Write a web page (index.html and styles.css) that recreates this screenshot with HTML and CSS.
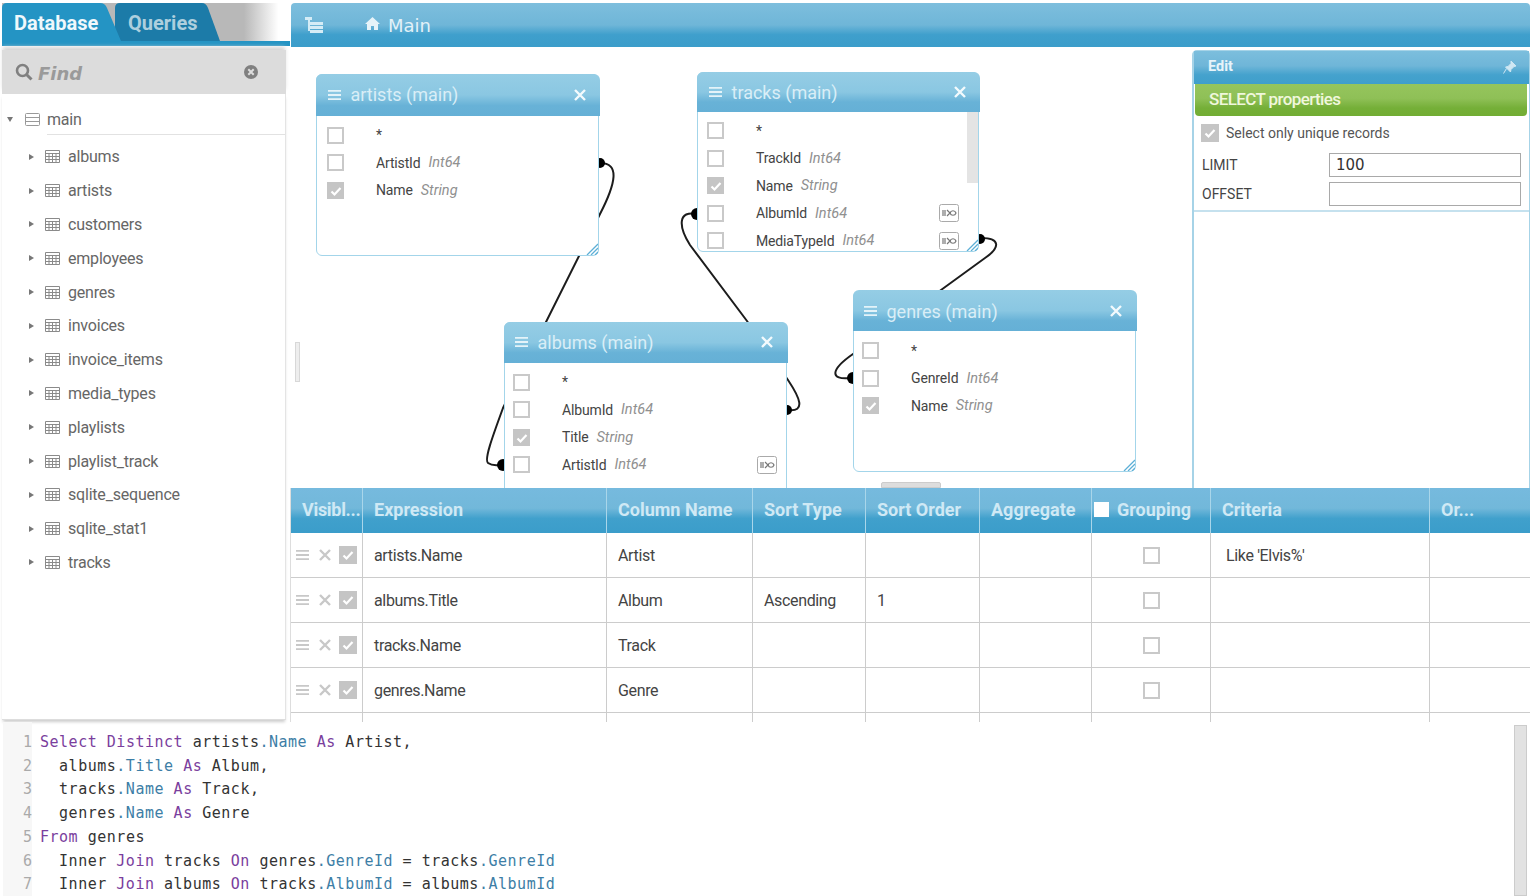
FILE: index.html
```html
<!DOCTYPE html>
<html lang="en">
<head>
<meta charset="utf-8">
<title>Query Builder</title>
<link rel="stylesheet" href="styles.css">
</head>
<body>
<svg class="defs" width="0" height="0" aria-hidden="true">
  <symbol id="tbl" viewBox="0 0 15 13"><path d="M.5.5h14v12H.5zM.5 3.5h14M.5 6.5h14M.5 9.5h14M4 3.5v9M7.5 3.5v9M11 3.5v9" fill="none" stroke="#8a8a8a"/></symbol>
  <symbol id="menu" viewBox="0 0 14 12"><path d="M0 1.5h14M0 6h14M0 10.5h14" fill="none" stroke="currentColor" stroke-width="2"/></symbol>
  <symbol id="close" viewBox="0 0 12 12"><path d="M1 1l10 10M11 1L1 11" fill="none" stroke="currentColor" stroke-width="2.4"/></symbol>
  <symbol id="rz" viewBox="0 0 12 12"><path d="M1 12L12 1M5 12l7-7M9 12l3-3" fill="none" stroke="#5cafd6" stroke-width="1.3"/></symbol>
  <symbol id="lnk" viewBox="0 0 20 18"><rect x=".5" y=".5" width="19" height="17" rx="2" fill="#fff" stroke="#aaa"/><path d="M4 6v6M6 6v6M8 6l3 3-3 3M11 9c1-3 5-3 6 0-1 3-5 3-6 0z" fill="none" stroke="#777" stroke-width="1.2"/></symbol>
  <symbol id="chk" viewBox="0 0 18 18"><path d="M4.5 9.5l3 3 6-6.5" fill="none" stroke="#fff" stroke-width="2.2"/></symbol>
</svg>

<div class="app">
  <div class="upper">
    <aside class="side">
      <div class="tabs">
        <div class="tab tab-db">Database</div>
        <div class="tab tab-q">Queries</div>
      </div>
      <div class="search">
        <svg class="search-ico" viewBox="0 0 18 18"><circle cx="7.5" cy="7.5" r="5.5" fill="none" stroke="#808080" stroke-width="2.6"/><path d="M11.5 11.5l5 5" stroke="#808080" stroke-width="3"/></svg>
        <span class="find">Find</span>
        <svg class="clear-ico" viewBox="0 0 14 14"><circle cx="7" cy="7" r="7" fill="#808080"/><path d="M4.3 4.3l5.4 5.4M9.7 4.3l-5.4 5.4" stroke="#ddd" stroke-width="2"/></svg>
      </div>
      <div class="tree">
        <div class="db-row">
          <span class="tri-down"></span>
          <svg class="db-ico" viewBox="0 0 15 13"><path d="M.5 1.5a1 1 0 011-1h12a1 1 0 011 1v10a1 1 0 01-1 1h-12a1 1 0 01-1-1zM.5 4.5h14M.5 8.5h14" fill="none" stroke="#999"/></svg>
          <span class="db-name">main</span>
        </div>
        <ul class="tbls">
          <li><span class="tri-right"></span><svg class="tbl-ico"><use href="#tbl"/></svg>albums</li>
          <li><span class="tri-right"></span><svg class="tbl-ico"><use href="#tbl"/></svg>artists</li>
          <li><span class="tri-right"></span><svg class="tbl-ico"><use href="#tbl"/></svg>customers</li>
          <li><span class="tri-right"></span><svg class="tbl-ico"><use href="#tbl"/></svg>employees</li>
          <li><span class="tri-right"></span><svg class="tbl-ico"><use href="#tbl"/></svg>genres</li>
          <li><span class="tri-right"></span><svg class="tbl-ico"><use href="#tbl"/></svg>invoices</li>
          <li><span class="tri-right"></span><svg class="tbl-ico"><use href="#tbl"/></svg>invoice_items</li>
          <li><span class="tri-right"></span><svg class="tbl-ico"><use href="#tbl"/></svg>media_types</li>
          <li><span class="tri-right"></span><svg class="tbl-ico"><use href="#tbl"/></svg>playlists</li>
          <li><span class="tri-right"></span><svg class="tbl-ico"><use href="#tbl"/></svg>playlist_track</li>
          <li><span class="tri-right"></span><svg class="tbl-ico"><use href="#tbl"/></svg>sqlite_sequence</li>
          <li><span class="tri-right"></span><svg class="tbl-ico"><use href="#tbl"/></svg>sqlite_stat1</li>
          <li><span class="tri-right"></span><svg class="tbl-ico"><use href="#tbl"/></svg>tracks</li>
        </ul>
      </div>
    </aside>

    <main class="main">
      <div class="toolbar">
        <svg class="tree-ico" viewBox="0 0 18 16"><path d="M0 0h7v3H0zM3 3h2v11H3zM5 5h13v3H5zM5 9h13v3H5zM5 13h13v3H5z" fill="#d5ecf6"/></svg>
        <svg class="home-ico" viewBox="0 0 15 13"><path d="M7.500 0L15 7h-2v6H9V9H6v4H2V7H0z" fill="#e6f3f9"/></svg>
        <span class="crumb">Main</span>
      </div>
      <div class="work">
        <section class="canvas">
          <svg class="links" viewBox="291 47 900 441">
            <g fill="none" stroke="#1c1c1c" stroke-width="2">
              <path d="M600 163C620 163 616 183 600 214L503 408C492 438 484 460 488 463Q492 466 500 465"/>
              <path d="M697 214C678 210 678 226 690 245L747 321L788 380C800 398 806 412 788 410"/>
              <path d="M981 238C1001 238 1000 248 985 258L941 290L853 354C830 370 830 380 850 378"/>
            </g>
            <g fill="#000">
              <circle cx="600" cy="163" r="5"/><circle cx="503" cy="465" r="6"/>
              <circle cx="697" cy="214" r="6"/><circle cx="787" cy="410" r="5"/>
              <circle cx="980" cy="239" r="5"/><circle cx="853" cy="378" r="6"/>
            </g>
          </svg>

          <div class="node n-artists">
            <div class="node-head"><svg class="nh-menu"><use href="#menu"/></svg><span class="nh-title">artists (main)</span><svg class="nh-close"><use href="#close"/></svg></div>
            <div class="node-body">
              <div class="frow"><span class="cb"></span><span class="fname">*</span></div>
              <div class="frow"><span class="cb"></span><span class="fname">ArtistId</span><i class="ftype">Int64</i></div>
              <div class="frow"><span class="cb on"><svg><use href="#chk"/></svg></span><span class="fname">Name</span><i class="ftype">String</i></div>
            </div>
            <svg class="rz"><use href="#rz"/></svg>
          </div>

          <div class="node n-tracks">
            <div class="node-head"><svg class="nh-menu"><use href="#menu"/></svg><span class="nh-title">tracks (main)</span><svg class="nh-close"><use href="#close"/></svg></div>
            <div class="node-body">
              <div class="frow"><span class="cb"></span><span class="fname">*</span></div>
              <div class="frow"><span class="cb"></span><span class="fname">TrackId</span><i class="ftype">Int64</i></div>
              <div class="frow"><span class="cb on"><svg><use href="#chk"/></svg></span><span class="fname">Name</span><i class="ftype">String</i></div>
              <div class="frow"><span class="cb"></span><span class="fname">AlbumId</span><i class="ftype">Int64</i><svg class="lnk lnk-s"><use href="#lnk"/></svg></div>
              <div class="frow"><span class="cb"></span><span class="fname">MediaTypeId</span><i class="ftype">Int64</i><svg class="lnk lnk-s"><use href="#lnk"/></svg></div>
              <div class="scroll-thumb"></div>
            </div>
            <svg class="rz"><use href="#rz"/></svg>
          </div>

          <div class="node n-albums">
            <div class="node-head"><svg class="nh-menu"><use href="#menu"/></svg><span class="nh-title">albums (main)</span><svg class="nh-close"><use href="#close"/></svg></div>
            <div class="node-body">
              <div class="frow"><span class="cb"></span><span class="fname">*</span></div>
              <div class="frow"><span class="cb"></span><span class="fname">AlbumId</span><i class="ftype">Int64</i></div>
              <div class="frow"><span class="cb on"><svg><use href="#chk"/></svg></span><span class="fname">Title</span><i class="ftype">String</i></div>
              <div class="frow"><span class="cb"></span><span class="fname">ArtistId</span><i class="ftype">Int64</i><svg class="lnk"><use href="#lnk"/></svg></div>
            </div>
          </div>

          <div class="node n-genres">
            <div class="node-head"><svg class="nh-menu"><use href="#menu"/></svg><span class="nh-title">genres (main)</span><svg class="nh-close"><use href="#close"/></svg></div>
            <div class="node-body">
              <div class="frow"><span class="cb"></span><span class="fname">*</span></div>
              <div class="frow"><span class="cb"></span><span class="fname">GenreId</span><i class="ftype">Int64</i></div>
              <div class="frow"><span class="cb on"><svg><use href="#chk"/></svg></span><span class="fname">Name</span><i class="ftype">String</i></div>
            </div>
            <svg class="rz"><use href="#rz"/></svg>
          </div>

          <div class="handle-v"></div>
          <div class="handle-h"></div>
        </section>

        <section class="edit">
          <div class="edit-head"><span>Edit</span>
            <svg class="pin" viewBox="0 0 14 14"><path d="M8 1l5 5-2 .5-3 3 -.5 2.500-5-5 2.500-.5 3-3zM3.500 8.500L.5 13.500" fill="#cfe7f3" stroke="#cfe7f3"/></svg>
          </div>
          <div class="edit-green">SELECT properties</div>
          <div class="edit-form">
            <label class="unique"><span class="cb on"><svg><use href="#chk"/></svg></span>Select only unique records</label>
            <div class="prop"><span>LIMIT</span><span class="inp">100</span></div>
            <div class="prop"><span>OFFSET</span><span class="inp"></span></div>
          </div>
        </section>
      </div>

      <div class="grid">
        <div class="gh gh-vis">Visibl...</div><div class="gh">Expression</div><div class="gh">Column Name</div><div class="gh">Sort Type</div><div class="gh">Sort Order</div><div class="gh">Aggregate</div><div class="gh gh-group"><span class="hbox"></span>Grouping</div><div class="gh">Criteria</div><div class="gh">Or...</div>

        <div class="gc gc-vis"><svg class="r-menu"><use href="#menu"/></svg><svg class="r-x"><use href="#close"/></svg><span class="cb on"><svg><use href="#chk"/></svg></span></div><div class="gc">artists.Name</div><div class="gc">Artist</div><div class="gc"></div><div class="gc"></div><div class="gc"></div><div class="gc gc-mid"><span class="cb"></span></div><div class="gc gc-crit">Like 'Elvis%'</div><div class="gc"></div>

        <div class="gc gc-vis"><svg class="r-menu"><use href="#menu"/></svg><svg class="r-x"><use href="#close"/></svg><span class="cb on"><svg><use href="#chk"/></svg></span></div><div class="gc">albums.Title</div><div class="gc">Album</div><div class="gc">Ascending</div><div class="gc">1</div><div class="gc"></div><div class="gc gc-mid"><span class="cb"></span></div><div class="gc"></div><div class="gc"></div>

        <div class="gc gc-vis"><svg class="r-menu"><use href="#menu"/></svg><svg class="r-x"><use href="#close"/></svg><span class="cb on"><svg><use href="#chk"/></svg></span></div><div class="gc">tracks.Name</div><div class="gc">Track</div><div class="gc"></div><div class="gc"></div><div class="gc"></div><div class="gc gc-mid"><span class="cb"></span></div><div class="gc"></div><div class="gc"></div>

        <div class="gc gc-vis"><svg class="r-menu"><use href="#menu"/></svg><svg class="r-x"><use href="#close"/></svg><span class="cb on"><svg><use href="#chk"/></svg></span></div><div class="gc">genres.Name</div><div class="gc">Genre</div><div class="gc"></div><div class="gc"></div><div class="gc"></div><div class="gc gc-mid"><span class="cb"></span></div><div class="gc"></div><div class="gc"></div>

        <div class="gs"></div><div class="gs"></div><div class="gs"></div><div class="gs"></div><div class="gs"></div><div class="gs"></div><div class="gs"></div><div class="gs"></div><div class="gs"></div>
      </div>
    </main>
  </div>

  <div class="editor">
    <div class="gutter"><div>1</div><div>2</div><div>3</div><div>4</div><div>5</div><div>6</div><div>7</div></div>
    <div class="code">
      <div class="ln"><span class="k">Select</span> <span class="k">Distinct</span> artists<span class="p">.Name</span> <span class="k">As</span> Artist,</div>
      <div class="ln">  albums<span class="p">.Title</span> <span class="k">As</span> Album,</div>
      <div class="ln">  tracks<span class="p">.Name</span> <span class="k">As</span> Track,</div>
      <div class="ln">  genres<span class="p">.Name</span> <span class="k">As</span> Genre</div>
      <div class="ln"><span class="k">From</span> genres</div>
      <div class="ln">  Inner <span class="k">Join</span> tracks <span class="k">On</span> genres<span class="p">.GenreId</span> = tracks<span class="p">.GenreId</span></div>
      <div class="ln">  Inner <span class="k">Join</span> albums <span class="k">On</span> tracks<span class="p">.AlbumId</span> = albums<span class="p">.AlbumId</span></div>
    </div>
    <div class="ed-scroll"></div>
  </div>
</div>
</body>
</html>
```
FILE: styles.css
```css
* { box-sizing: border-box; }
html, body { margin: 0; padding: 0; background: #fff; }
body { font-family: Roboto, "Liberation Sans", sans-serif; color: #444; }
.defs { position: absolute; }
.app { width: 1532px; height: 896px; overflow: hidden; display: flex; flex-direction: column; }
.upper { display: flex; height: 722px; flex: none; }

/* sidebar */
.side { width: 287px; flex: none; padding: 3px 0 0 2px; height: 720px; display: flex; flex-direction: column; }
.tabs { display: flex; height: 43px; flex: none; margin-right: -3px; border-bottom: 5px solid #2494c4; background: linear-gradient(90deg, #b8b8b8 0, #b8b8b8 84%, #fff 96%); }
.tab { height: 38px; font-size: 20px; font-weight: 700; line-height: 41px; }
.tab-db { width: 119px; padding-left: 12px; color: #f0f8fc; background: #2494c4; position: relative; z-index: 2; clip-path: path("M0 38V5Q0 0 5 0H98Q103 0 105 5L119 38Z"); }
.tab-q { width: 105px; margin-left: -6px; padding-left: 13px; color: #aecfde; background: #1c7ba8; clip-path: path("M0 38V5Q0 0 5 0H87Q91 0 93 5L105 38Z"); }
.search { height: 44px; margin-top: 4px; margin-right: 1px; flex: none; background: #dcdcdc; display: flex; align-items: center; padding-left: 13px; box-shadow: 0 -4px 4px -1px #d4d4d4; }
.search-ico { width: 18px; height: 18px; }
.find { margin-left: 5px; padding-top: 2px; font: italic 700 18px "DejaVu Sans", sans-serif; color: #9a9a9a; }
.clear-ico { width: 14px; height: 14px; margin-left: auto; margin-right: 28px; }
.tree { flex: 1; border-right: 1px solid #e4e4e4; border-bottom: 1px solid #ddd; box-shadow: 0 3px 3px -1px #ccc; margin-right: 1px; }
.db-row { height: 41px; display: flex; align-items: center; position: relative; padding-top: 9px; }
.db-row::after { content: ""; position: absolute; left: 45px; right: 0; bottom: 0; border-bottom: 1px solid #e2e2e2; }
.tri-down { width: 0; height: 0; border: 3px solid transparent; border-top: 5px solid #777; border-bottom: 0; margin-left: 5px; }
.db-ico { width: 15px; height: 13px; margin-left: 12px; }
.db-name { margin-left: 7px; font-size: 16px; letter-spacing: -.2px; color: #666; }
.tbls { list-style: none; margin: 5px 0 0; padding: 0; }
.tbls li { height: 33.8px; display: flex; align-items: center; font-size: 16px; letter-spacing: -.2px; color: #666; }
.tri-right { width: 0; height: 0; border: 3px solid transparent; border-left: 5px solid #777; border-right: 0; margin-left: 27px; }
.tbl-ico { width: 15px; height: 13px; margin-left: 11px; margin-right: 8px; }

/* main */
.main { width: 1239px; margin-left: 4px; padding-top: 3px; display: flex; flex-direction: column; flex: none; }
.toolbar { height: 44px; flex: none; display: flex; align-items: center; border-radius: 4px 4px 0 0; background: linear-gradient(180deg, #7dbedd 0, #6fb6d8 50%, #3f9fcc 72%, #3b9dca 100%); }
.tree-ico { width: 18px; height: 16px; margin-left: 14px; }
.home-ico { width: 15px; height: 13px; margin-left: 42px; margin-bottom: 4px; }
.crumb { margin-left: 8px; font: 18px "DejaVu Sans", sans-serif; color: #e2f1f8; }
.work { height: 441px; flex: none; display: flex; }
.canvas { position: relative; width: 901px; flex: none; overflow: hidden; }
.links { position: absolute; left: 0; top: 0; width: 900px; height: 441px; }
.node { position: absolute; background: #fff; border: 1.5px solid #a3d5ea; border-radius: 6px; width: 283px; }
.n-artists { left: 25px; top: 27px; height: 182px; }
.n-tracks { left: 406px; top: 25px; height: 180px; width: 282px; }
.n-albums { left: 213px; top: 275px; height: 190px; }
.n-genres { left: 562px; top: 243.500px; height: 181.500px; }
.node-head { height: 41px; margin: -1.5px -1.5px 0; border-radius: 6px 6px 0 0; background: linear-gradient(180deg, #95cde5 0, #8ac7e2 50%, #68b2d7 75%, #65b0d6 100%); display: flex; align-items: center; padding: 0 14px 0 12px; color: #e4f3f9; }
.n-artists .node-head { height: 42px; }
.n-tracks .node-head { height: 40px; padding-top: 1px; }
.n-genres .node-head { padding-top: 1px; }
.n-albums .node-head, .n-genres .node-head { padding-left: 11px; padding-right: 15px; }
.nh-menu { width: 13px; height: 12px; flex: none; }
.nh-title { margin-left: 10px; font-size: 18px; color: #d9eef7; }
.nh-close { width: 12px; height: 12px; margin-left: auto; color: #f3fafd; }
.node-body { position: relative; height: calc(100% - 40px); overflow: hidden; padding-top: 6px; }
.n-tracks .node-body { padding-top: 5.500px; }
.frow { height: 27.5px; display: flex; align-items: center; padding-left: 10px; font-size: 14px; letter-spacing: -.15px; }
.n-tracks .frow { padding-left: 9px; }
.n-albums .frow, .n-genres .frow { padding-left: 8px; }
.cb { display: block; width: 17px; height: 17px; flex: none; border: 2px solid #c9c9c9; background: #fff; }
.cb.on { background: #c5c5c5; border-color: #c5c5c5; position: relative; }
.cb svg { position: absolute; left: -2px; top: -2px; width: 18px; height: 18px; }
.fname { margin-left: 32px; color: #444; }
.ftype { margin-left: 8px; font-size: 14.500px; letter-spacing: 0; color: #909090; font-style: italic; }
.lnk { width: 20px; height: 18px; margin-left: auto; margin-right: 9px; }
.lnk-s { margin-right: 19px; }
.scroll-thumb { position: absolute; right: 0; top: 0; width: 11px; height: 71px; background: #e4e4e4; }
.rz { position: absolute; right: 0; bottom: 0; width: 12px; height: 12px; }
.handle-v { position: absolute; left: 4px; top: 295px; width: 5px; height: 40px; background: #eee; border: 1px solid #d8d8d8; }
.handle-h { position: absolute; left: 590px; top: 435px; width: 60px; height: 6px; background: #ddd; border: 1px solid #ccc; border-radius: 2px 2px 0 0; }

/* edit panel */
.edit { width: 338px; flex: none; margin-top: 3px; border: 2px solid #a6d3e7; border-width: 1px 1.5px 0 2px; border-radius: 5px 5px 0 0; display: flex; flex-direction: column; }
.edit-head { height: 33px; flex: none; display: flex; align-items: center; justify-content: space-between; padding: 0 12px 2px 14px; font-size: 14.500px; font-weight: 700; color: #e7f4fa; background: linear-gradient(180deg, #7cbedd 0, #6fb6d8 45%, #45a2cd 72%, #3f9fcb 100%); }
.pin { width: 14px; height: 14px; }
.edit-green { height: 32px; flex: none; margin: 0 2px 0 1px; padding-left: 14px; font-size: 17px; font-weight: 500; letter-spacing: -.6px; line-height: 31px; color: #f0f7dc; border-radius: 0 0 4px 4px; background: linear-gradient(180deg, #95c55c 0, #8fc057 45%, #75af38 75%, #72ad34 100%); }
.edit-form { height: 96px; border-bottom: 2px solid #c5e1ee; padding: 7px 8px 0 8px; font-size: 14px; color: #444; }
.unique { display: flex; align-items: center; height: 19px; margin-left: -1px; font-size: 14px; gap: 7px; color: #555; }
.unique .cb { width: 18px; height: 18px; }
.prop { display: flex; justify-content: space-between; align-items: center; height: 29px; }
.unique + .prop { margin-top: 8px; }
.inp { width: 192px; height: 24px; border: 1px solid #a9a9a9; padding-left: 6px; font: 15px/22px "DejaVu Sans", sans-serif; color: #333; }

/* grid */
.grid { display: grid; grid-template-columns: 72px 244px 146px 113px 114px 112px 119px 219px 100px; grid-template-rows: 45px 45px 45px 45px 45px 9px; flex: none; border-left: 1px solid #ddd; height: 234px; margin-left: -1px; }
.gh { background: linear-gradient(180deg, #76bade 0, #72b8da 45%, #40a0cc 68%, #3b9dca 100%); font-size: 18px; font-weight: 700; color: #cfe9f5; display: flex; align-items: center; padding: 0 0 3px 11px; border-right: 1px solid #a9d6ea; white-space: nowrap; }
.gh:nth-child(9) { border-right: 0; }
.gh-vis { letter-spacing: -.3px; }
.gh-group { padding-left: 2px; }
.hbox { width: 15px; height: 15px; background: #fff; margin-right: 8px; flex: none; }
.gc { border-right: 1px solid #ccc; border-bottom: 1px solid #ccc; display: flex; align-items: center; padding-left: 11px; font-size: 16px; letter-spacing: -.35px; color: #444; }
.gc:nth-child(9n) { border-right: 0; }
.gc-vis { padding-left: 5px; }
.gc-mid { justify-content: center; padding-left: 0; }
.gc-crit { padding-left: 15px; }
.r-menu { width: 13px; height: 12px; color: #c8c8c8; flex: none; }
.r-x { width: 12px; height: 12px; margin-left: 10px; color: #c8c8c8; flex: none; }
.gc-vis .cb { margin-left: 8px; width: 18px; height: 18px; }
.gs { border-right: 1px solid #ccc; }
.gs:last-child { border-right: 0; }

/* editor */
.editor { flex: 1; display: flex; position: relative; padding-left: 3px; overflow: hidden; }
.gutter { width: 29px; flex: none; background: #f7f7f7; padding-top: 9px; text-align: right; font: 15px/23.700px "DejaVu Sans Mono", monospace; color: #aaa; }
.code { padding: 9px 0 0 8px; font: 15px/23.700px "DejaVu Sans Mono", monospace; letter-spacing: .51px; color: #333; }
.ln { white-space: pre; }
.k { color: #7a3e9d; }
.p { color: #3d7ea6; }
.ed-scroll { position: absolute; right: 5px; top: 3px; bottom: 0; width: 13px; background: #e2e2e2; border: 1px solid #ccc; }
```
